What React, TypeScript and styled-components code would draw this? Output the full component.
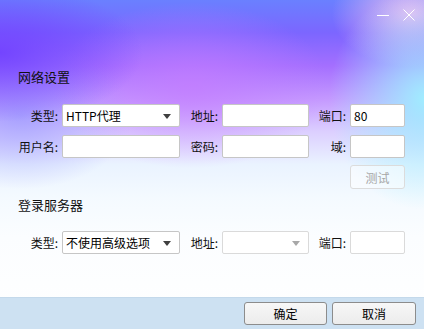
import styled, { createGlobalStyle } from "styled-components";

const GlobalStyle = createGlobalStyle`
  html, body {
    margin: 0;
    padding: 0;
    background: #ffffff;
  }
  * {
    box-sizing: border-box;
  }
`;

const Window = styled.div`
  width: 424px;
  height: 329px;
  display: flex;
  flex-direction: column;
  overflow: hidden;
  font-family: "Noto Sans CJK SC", "Noto Sans", sans-serif;
  color: #111;
  background:
    radial-gradient(ellipse 45% 28% at 0% 16%, rgba(112, 64, 255, 0.9), rgba(112, 64, 255, 0) 75%),
    radial-gradient(ellipse 30% 45% at 100% 30%, rgba(160, 236, 255, 1), rgba(160, 236, 255, 0) 75%),
    radial-gradient(ellipse 25% 22% at 97% 4%, rgba(240, 190, 240, 0.95), rgba(240, 190, 240, 0) 75%),
    radial-gradient(ellipse 45% 35% at 45% 26%, rgba(196, 124, 255, 0.75), rgba(196, 124, 255, 0) 72%),
    radial-gradient(ellipse 35% 30% at 5% 35%, rgba(150, 150, 255, 0.7), rgba(150, 150, 255, 0) 75%),
    linear-gradient(180deg, #6a80ff 0%, #7c66ff 10%, #a46fff 20%, #c498ff 30%, #dccfff 40%, #eaf3ff 50%, #f4faff 60%, #fbfdff 72%, #ffffff 100%);
`;

const TitleBar = styled.div`
  height: 30px;
  display: flex;
  justify-content: flex-end;
  align-items: center;
  gap: 14px;
  padding-right: 9px;
`;

const TitleIcon = styled.svg`
  display: block;
  width: 12px;
  height: 12px;
`;

const Content = styled.div`
  padding-left: 18px;
  display: flex;
  flex-direction: column;
`;

const SectionTitle = styled.div<{ $top: number }>`
  margin-top: ${(p) => p.$top}px;
  font-size: 13px;
  line-height: 16px;
  height: 16px;
`;

const Form = styled.div<{ $top: number }>`
  margin-left: -18px;
  margin-top: ${(p) => p.$top}px;
  display: grid;
  grid-template-columns: 62px 118px 42px 87px 41px 55px;
  grid-auto-rows: 23px;
  row-gap: 8px;
`;

const Label = styled.div`
  display: flex;
  align-items: center;
  justify-content: flex-end;
  padding-right: 4px;
  font-size: 12px;
  white-space: nowrap;
`;

const Field = styled.div<{ $disabled?: boolean }>`
  position: relative;
  display: flex;
  align-items: center;
  background: #ffffff;
  border: 1px solid ${(p) => (p.$disabled ? "#dadada" : "#c6c6c6")};
  border-radius: 2px;
  padding-left: 3px;
  font-size: 12px;
  color: #000;
  white-space: nowrap;
`;

const Arrow = styled.span<{ $disabled?: boolean }>`
  position: absolute;
  right: 8px;
  top: 9px;
  width: 0;
  height: 0;
  border-left: 4px solid transparent;
  border-right: 4px solid transparent;
  border-top: 5px solid ${(p) => (p.$disabled ? "#a8a8a8" : "#404040")};
`;

const Spacer = styled.div<{ $span: number }>`
  grid-column: span ${(p) => p.$span};
`;

const TestButton = styled.button`
  font-family: inherit;
  font-size: 12px;
  color: #a6a6a6;
  background: rgba(255, 255, 255, 0.5);
  border: 1px solid #dcdcdc;
  border-radius: 3px;
  padding: 0;
  margin-top: -1px;
`;

const Footer = styled.div`
  margin-top: auto;
  height: 32px;
  background: #cde1f2;
  border-top: 1px solid #c4d9eb;
  display: flex;
  justify-content: flex-end;
  align-items: flex-start;
  gap: 5px;
  padding: 4px 8px 0 0;
`;

const FooterButton = styled.button<{ $w: number }>`
  width: ${(p) => p.$w}px;
  height: 23px;
  font-family: inherit;
  font-size: 12px;
  color: #000;
  background: linear-gradient(180deg, #f7f7f7 0%, #ececec 100%);
  border: 1px solid #8c8c8c;
  border-radius: 3px;
  padding: 0;
`;

export default function App() {
  return (
    <>
      <GlobalStyle />
      <Window>
        <TitleBar>
          <TitleIcon viewBox="0 0 12 12">
            <line x1="0" y1="6.5" x2="12" y2="6.5" stroke="#fff" strokeWidth="1" />
          </TitleIcon>
          <TitleIcon viewBox="0 0 12 12">
            <path d="M0.5 0.5 L11.5 11.5 M11.5 0.5 L0.5 11.5" stroke="#fff" strokeWidth="1" />
          </TitleIcon>
        </TitleBar>
        <Content>
          <SectionTitle $top={39}>网络设置</SectionTitle>
          <Form $top={19}>
            <Label>类型:</Label>
            <Field>
              HTTP代理
              <Arrow />
            </Field>
            <Label>地址:</Label>
            <Field />
            <Label>端口:</Label>
            <Field>80</Field>

            <Label>用户名:</Label>
            <Field />
            <Label>密码:</Label>
            <Field />
            <Label>域:</Label>
            <Field />

            <Spacer $span={5} />
            <TestButton disabled>测试</TestButton>
          </Form>
          <SectionTitle $top={8}>登录服务器</SectionTitle>
          <Form $top={18}>
            <Label>类型:</Label>
            <Field>
              不使用高级选项
              <Arrow />
            </Field>
            <Label>地址:</Label>
            <Field $disabled>
              <Arrow $disabled />
            </Field>
            <Label>端口:</Label>
            <Field $disabled />
          </Form>
        </Content>
        <Footer>
          <FooterButton $w={83}>确定</FooterButton>
          <FooterButton $w={84}>取消</FooterButton>
        </Footer>
      </Window>
    </>
  );
}
